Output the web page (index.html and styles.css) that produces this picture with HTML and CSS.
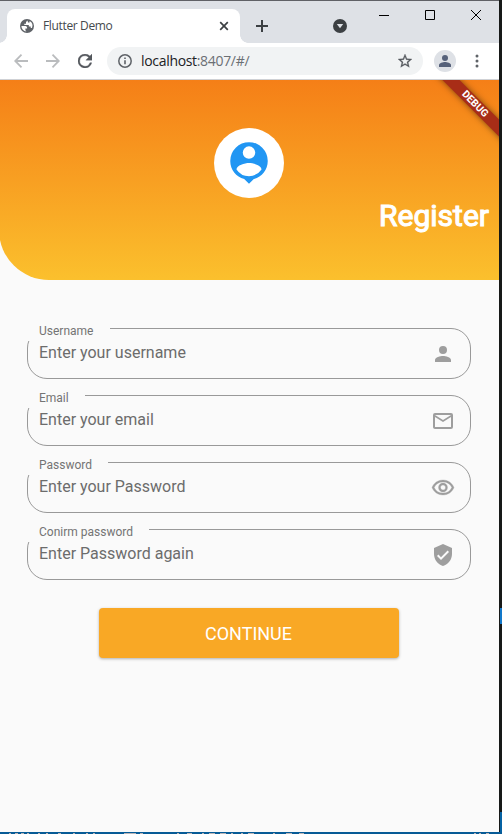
FILE: index.html
```html
<!DOCTYPE html>
<html lang="en">
<head>
<meta charset="utf-8">
<title>Flutter Demo</title>
<link rel="stylesheet" href="styles.css">
</head>
<body>
<div class="desktop">
<div class="window">
  <div class="tabstrip">
    <div class="tab">
      <svg class="globe" width="16" height="16" viewBox="0 0 16 16"><circle cx="8" cy="8" r="7" fill="#5f6368"/><path d="M2.400 8h4.200c1.200.400 1.700 1.200 1.500 2.400H6.400v1.900l1 1.300A5.600 5.600 0 0 1 2.400 8zM8.500 2.400 7 3.900v1.800H5.300v1.200h4.500v1.700h1.900V9.900h1.300A5.600 5.600 0 0 0 10.600 3v1.500H9z" fill="#fff"/></svg>
      <span class="tab-title">Flutter Demo</span>
      <svg width="10" height="10" viewBox="0 0 10 10"><path d="m1.200 1.200 7.600 7.600m0-7.600L1.200 8.800" stroke="#3c4043" stroke-width="1.700"/></svg>
    </div>
    <svg class="new-tab" width="12" height="12" viewBox="0 0 12 12"><path d="M6 0v12M0 6h12" stroke="#3c4043" stroke-width="2"/></svg>
    <svg class="tab-search" width="14" height="14" viewBox="0 0 14 14"><circle cx="7" cy="7" r="7" fill="#3c4043"/><path d="M3.800 5h6.400L7 9.300z" fill="#dee1e6"/></svg>
    <div class="controls">
      <svg width="10" height="10" viewBox="0 0 10 10"><path d="M0 5.500h10" stroke="#000"/></svg>
      <svg width="10" height="10" viewBox="0 0 10 10"><path d="M.5.500h9v9h-9z" fill="none" stroke="#000"/></svg>
      <svg width="10" height="10" viewBox="0 0 10 10"><path d="m0 0 10 10M10 0 0 10" stroke="#000"/></svg>
    </div>
  </div>
  <div class="toolbar">
    <svg class="back" width="14" height="14" viewBox="0 0 14 14"><path d="M14 7H1.500M7.500.700 1.200 7l6.300 6.300" fill="none" stroke="#babcbe" stroke-width="1.800"/></svg>
    <svg class="forward" width="14" height="14" viewBox="0 0 14 14"><path d="M0 7h12.500M6.500.700 12.800 7l-6.300 6.300" fill="none" stroke="#babcbe" stroke-width="1.800"/></svg>
    <svg class="reload" width="14" height="14" viewBox="4 4 16 16"><path d="M17.650 6.350A7.960 7.960 0 0 0 12 4a8 8 0 1 0 7.730 10h-2.080A6 6 0 1 1 12 6c1.660 0 3.140.690 4.220 1.780L13 11h7V4z" fill="#54585d" stroke="#54585d" stroke-width=".4"/></svg>
    <div class="address">
      <svg width="14" height="14" viewBox="0 0 14 14"><circle cx="7" cy="7" r="6.200" fill="none" stroke="#5f6368" stroke-width="1.500"/><path d="M7 6.200v4M7 3.500v1.600" stroke="#5f6368" stroke-width="1.600"/></svg>
      <span class="url">localhost<span class="port">:8407/#/</span></span>
      <svg width="14" height="14" viewBox="2 2 20 20"><path d="m22 9.240-7.190-.620L12 2 9.190 8.630 2 9.240l5.460 4.730L5.820 21 12 17.270 18.180 21l-1.630-7.030zM12 15.400l-3.760 2.270 1-4.280-3.320-2.880 4.380-.380L12 6.100l1.710 4.040 4.380.380-3.320 2.880 1 4.280z" fill="#54585d" stroke="#54585d" stroke-width=".4"/></svg>
    </div>
    <svg class="profile" width="22" height="22" viewBox="0 0 22 22"><circle cx="11" cy="11" r="11" fill="#dee1e6"/><circle cx="11" cy="8" r="3" fill="#56617a"/><path d="M5 17v-2c0-2 4-3 6-3s6 1 6 3v2z" fill="#56617a"/></svg>
    <svg width="4" height="14" viewBox="0 0 4 14"><g fill="#5f6368"><circle cx="2" cy="2" r="1.500"/><circle cx="2" cy="7" r="1.500"/><circle cx="2" cy="12" r="1.500"/></g></svg>
  </div>
  <main class="page">
    <header class="hero">
      <div class="avatar"><svg width="45" height="45" viewBox="0 0 24 24"><path d="M12 2a9 9 0 0 0-9 9c0 4.170 2.840 7.670 6.690 8.690L12 22l2.310-2.310C18.160 18.670 21 15.170 21 11a9 9 0 0 0-9-9zm0 2a3 3 0 1 1 0 6 3 3 0 0 1 0-6zm0 14.300a7.200 7.200 0 0 1-6-3.220c.030-1.990 4-3.080 6-3.080s5.970 1.090 6 3.080a7.200 7.200 0 0 1-6 3.220z"/></svg></div>
      <h1>Register</h1>
      <div class="ribbon">DEBUG</div>
    </header>
    <form class="form">
      <div class="field"><label class="notch">Username</label><span class="hint">Enter your username</span>
        <svg width="24" height="24" viewBox="0 0 24 24"><path d="M12 12a4 4 0 1 0 0-8 4 4 0 0 0 0 8zm0 2c-2.670 0-8 1.340-8 4v2h16v-2c0-2.660-5.330-4-8-4z"/></svg></div>
      <div class="field"><label class="notch">Email</label><span class="hint">Enter your email</span>
        <svg width="24" height="24" viewBox="0 0 24 24"><path fill-rule="evenodd" d="M20 4H4a2 2 0 0 0-2 2v12c0 1.100.900 2 2 2h16a2 2 0 0 0 2-2V6a2 2 0 0 0-2-2zm0 14H4V8l8 5 8-5zm-8-7L4 6h16z"/></svg></div>
      <div class="field"><label class="notch">Password</label><span class="hint">Enter your Password</span>
        <svg width="24" height="24" viewBox="0 0 24 24"><path d="M12 6a9.770 9.770 0 0 1 8.820 5.500 9.760 9.760 0 0 1-17.640 0A9.770 9.770 0 0 1 12 6m0-2C7 4 2.730 7.110 1 11.500 2.730 15.890 7 19 12 19s9.270-3.110 11-7.500C21.270 7.110 17 4 12 4zm0 5a2.500 2.500 0 1 1 0 5 2.500 2.500 0 0 1 0-5m0-2a4.500 4.500 0 1 0 0 9 4.500 4.500 0 0 0 0-9z" stroke="#9e9e9e" stroke-width=".3"/></svg></div>
      <div class="field"><label class="notch">Conirm password</label><span class="hint">Enter Password again</span>
        <svg width="24" height="24" viewBox="0 0 24 24"><path d="M12 1 3 5v6c0 5.550 3.840 10.740 9 12 5.160-1.260 9-6.450 9-12V5zm-2 16-4-4 1.410-1.410L10 14.170l6.590-6.590L18 9z"/></svg></div>
      <button class="submit" type="button">CONTINUE</button>
    </form>
  </main>
</div>
<svg class="edge" width="502" height="2" viewBox="0 0 502 2"><path d="M9 1.500h2m4 0h3m3 0h3m3 0h2m9 0h2m6 0h2m10 0h3m12 0h2m11 0h2m5 0h2m29 0h12m4 0h3m34 0h2m8 0h5m10 0h2m5 0h6m5 0h6m5 0h2m8 0h2m5 0h6m19 0h2m11 0h6m7 0h5m170 0h2m3 0h2m5 0h3" stroke="#b9b5b8"/></svg>
</div>
</body>
</html>
```
FILE: styles.css
```css
* { box-sizing: border-box; }
body { margin: 0; }
svg { display: block; flex: none; }
.desktop {
  width: 502px;
  height: 834px;
  background:
    linear-gradient(#075b96, #075b96) 0 832px / 502px 2px no-repeat,
    linear-gradient(#1278ca, #1278ca) 500px 608px / 2px 16px no-repeat,
    linear-gradient(#0562a3, #0562a3) 500px 812px / 2px 22px no-repeat,
    #171918;
  overflow: hidden;
}
.window {
  width: 499px;
  height: 832px;
  display: flex;
  flex-direction: column;
  background: #fafafa;
  border-top: 1px solid #606166;
  font-family: Roboto, sans-serif;
}
.tabstrip {
  height: 42px;
  flex: none;
  display: flex;
  align-items: flex-start;
  padding: 8px 18px 0 7px;
  background: #dee1e6;
}
.tab {
  width: 233px;
  height: 34px;
  display: flex;
  align-items: center;
  padding: 0 11px 0 12px;
  background: #fff;
  border-radius: 8px 8px 0 0;
  position: relative;
}
.tab::before, .tab::after {
  content: "";
  position: absolute;
  bottom: 0;
  width: 8px;
  height: 8px;
}
.tab::before { left: -8px; background: radial-gradient(circle at 0 0, transparent 7.5px, #fff 8px); }
.tab::after { right: -8px; background: radial-gradient(circle at 100% 0, transparent 7.5px, #fff 8px); }
.tab-title {
  flex: 1;
  margin: -2px 0 0 8px;
  font: 12px "Open Sans", sans-serif;
  letter-spacing: -0.35px;
  color: #45494d;
}
.new-tab { margin: 11px 0 0 16px; }
.tab-search { margin: 10px 0 0 65px; }
.controls { margin-left: auto; display: flex; gap: 36px; margin-top: 1px; }
.toolbar {
  height: 37px;
  flex: none;
  display: flex;
  align-items: center;
  padding: 0 20px 0 14px;
  background: #fff;
  border-bottom: 1px solid #cfd1d5;
}
.forward { margin-left: 18px; }
.reload { margin-left: 18px; }
.address {
  width: 316px;
  height: 28px;
  display: flex;
  align-items: center;
  margin-left: 15px;
  padding: 0 11px;
  background: #f1f3f4;
  border-radius: 14px;
}
.url {
  flex: 1;
  margin: -1px 0 0 9px;
  font: 14px "Open Sans", sans-serif;
  letter-spacing: -0.32px;
  color: #202124;
}
.port { color: #6b6f74; }
.profile { margin: 0 auto 0 11px; }
.hero {
  height: 200px;
  margin-left: -1px;
  position: relative;
  display: flex;
  flex-direction: column;
  align-items: center;
  padding: 47.500px 10px 0 0;
  background: linear-gradient(#f57f17, #fbc02d);
  border-bottom-left-radius: 50px;
  overflow: hidden;
}
.avatar {
  width: 70px;
  height: 70px;
  margin-left: 10px;
  display: grid;
  place-items: center;
  background: #fff;
  border-radius: 50%;
}
.avatar svg { width: 50px; height: 50px; fill: #2196f3; }
h1 {
  align-self: flex-end;
  margin: 0.500px 0 0;
  font: 400 30px/36px Roboto, sans-serif;
  -webkit-text-stroke: 1.100px #fff;
  color: #fff;
}
.ribbon {
  position: absolute;
  top: 18px;
  right: -41px;
  width: 130px;
  height: 12px;
  transform: rotate(45deg);
  background: #a82d17;
  box-shadow: 0 0 6px rgba(0, 0, 0, .5);
  color: #fff;
  font: 700 10.200px/12px Roboto, sans-serif;
  text-align: center;
}
.form {
  display: flex;
  flex-direction: column;
  gap: 16px;
  padding: 48px 28px 0 27px;
}
.field {
  height: 51px;
  position: relative;
  display: flex;
  align-items: center;
  padding: 0 15px 0 11px;
  border: 1px solid #999;
  border-radius: 20px;
}
.notch {
  position: absolute;
  top: -5px;
  left: -1px;
  height: 17px;
  padding: 0 16.400px 0 12px;
  background: #fafafa;
  color: #747474;
  font-size: 12px;
  line-height: 14px;
}
.hint {
  flex: 1;
  margin-bottom: 3px;
  color: #6c6c6c;
  font-size: 16px;
  line-height: 19px;
}
.field svg { fill: #9e9e9e; }
.submit {
  align-self: center;
  width: 300px;
  height: 50px;
  margin: 12px 0 0 -1px;
  padding: 0;
  border: 0;
  border-radius: 4px;
  background: #f9a825;
  box-shadow: 0 1px 3px rgba(0, 0, 0, .3);
  color: #fff;
  font: 400 18px Roboto, sans-serif;
}
```
